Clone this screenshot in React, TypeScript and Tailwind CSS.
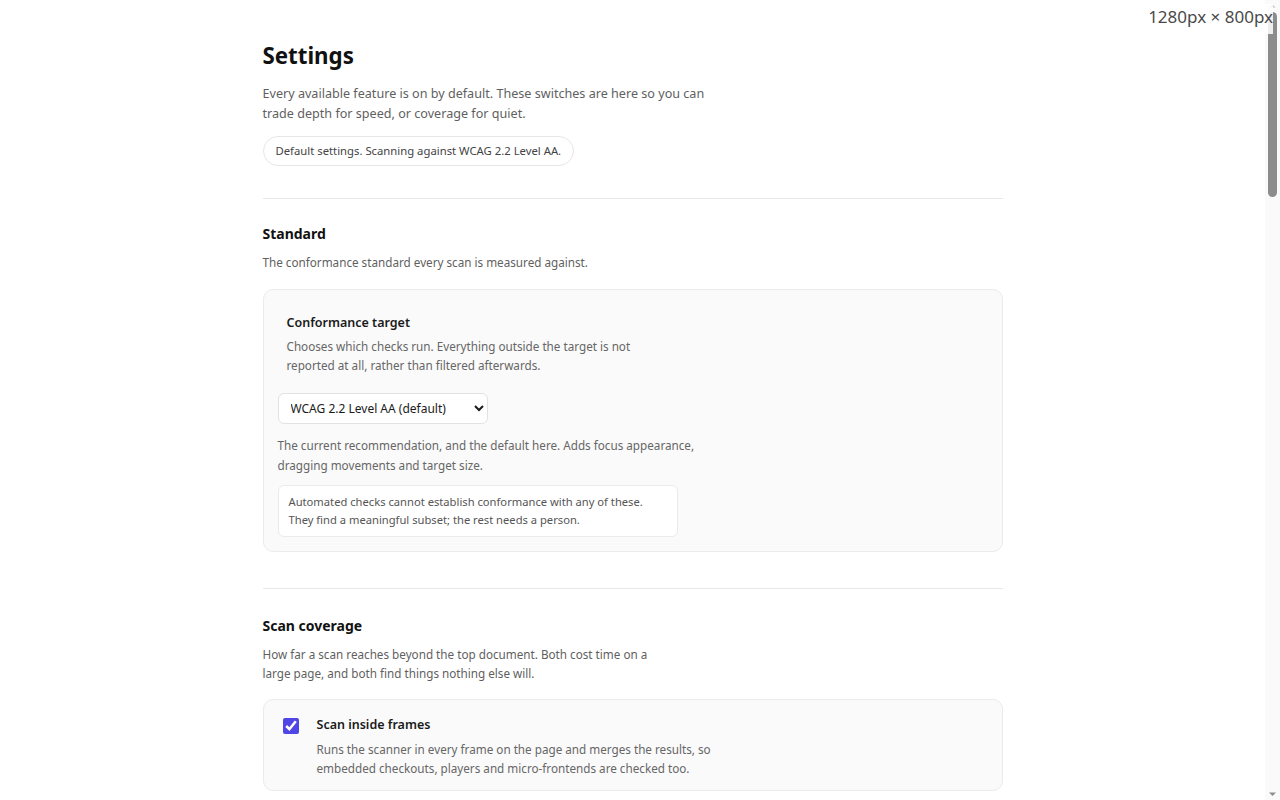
import React from 'react';

const font = { fontFamily: '"Noto Sans", "Open Sans", Arial, sans-serif' };

function SectionHead({ title, children }: { title: string; children: React.ReactNode }) {
  return (
    <>
      <h2 className="text-[14px] leading-[22px] font-bold text-[#111]">{title}</h2>
      <p className="mt-2 max-w-[400px] text-[11.7px] leading-[19.5px] text-[#5f5f5f]">{children}</p>
    </>
  );
}

function CheckRow({ title, desc, checked = true }: { title: string; desc: string; checked?: boolean }) {
  return (
    <label className="flex gap-[18px] rounded-[10px] border border-[#ebebeb] bg-[#fafafa] pl-[19px] pr-4 pt-[15px] pb-[12px]">
      <input
        type="checkbox"
        defaultChecked={checked}
        className="mt-[3px] h-4 w-4 shrink-0 accent-[#4f46e5]"
      />
      <div>
        <div className="text-[12.5px] leading-[20px] font-semibold text-[#1a1a1a]">{title}</div>
        <p className="mt-[5px] max-w-[420px] text-[11.7px] leading-[19px] text-[#666]">{desc}</p>
      </div>
    </label>
  );
}

function Scrollbar() {
  return (
    <div className="flex w-[15px] shrink-0 flex-col items-center bg-[#fafafa]">
      <svg width="15" height="12" viewBox="0 0 15 12" className="shrink-0">
        <path d="M4.5 7.5 L7.5 4.5 L10.5 7.5 Z" fill="#c4c4c4" />
      </svg>
      <div className="h-[185px] w-[9px] rounded-full bg-[#8c8c8c]" />
      <div className="flex-1" />
      <svg width="15" height="12" viewBox="0 0 15 12" className="shrink-0">
        <path d="M4 4.5 L11 4.5 L7.5 8 Z" fill="#8c8c8c" />
      </svg>
    </div>
  );
}

export default function App() {
  return (
    <div className="relative flex h-screen bg-white" style={font}>
      <div className="h-full flex-1 overflow-y-auto">
        <main className="mx-auto max-w-[740px] pt-10 pb-24 min-h-[3330px]">
          <h1 className="text-[22.3px] leading-[32px] font-bold text-[#111]">Settings</h1>
          <p className="mt-[12px] max-w-[460px] text-[12.6px] leading-[20px] text-[#5f5f5f]">
            Every available feature is on by default. These switches are here so you can trade depth for
            speed, or coverage for quiet.
          </p>
          <div className="mt-[12px] inline-flex h-[30px] items-center rounded-full border border-[#e6e6e6] px-3 text-[11.3px] text-[#444]">
            Default settings. Scanning against WCAG 2.2 Level AA.
          </div>

          <hr className="mt-8 border-t border-[#e8e8e8]" />

          <section className="mt-6">
            <SectionHead title="Standard">The conformance standard every scan is measured against.</SectionHead>
            <div className="mt-4 rounded-[10px] border border-[#ebebeb] bg-[#fafafa] pl-[14px] pr-4 pt-4 pb-[14px]">
              <div className="px-[9px] pt-[7px]">
                <div className="text-[12.5px] leading-[20px] font-semibold text-[#1a1a1a]">Conformance target</div>
                <p className="mt-[4px] max-w-[360px] text-[11.7px] leading-[19px] text-[#666]">
                  Chooses which checks run. Everything outside the target is not reported at all, rather than
                  filtered afterwards.
                </p>
              </div>
              <select
                defaultValue="22aa"
                className="mt-[18px] block h-[31px] w-[210px] rounded-md border border-[#e2e2e2] bg-white pl-[8px] pr-2 text-[12px] text-[#1a1a1a]"
              >
                <option value="21a">WCAG 2.1 Level A</option>
                <option value="21aa">WCAG 2.1 Level AA</option>
                <option value="22a">WCAG 2.2 Level A</option>
                <option value="22aa">WCAG 2.2 Level AA (default)</option>
                <option value="22aaa">WCAG 2.2 Level AAA</option>
              </select>
              <p className="mt-[11px] max-w-[440px] text-[11.7px] leading-[20px] text-[#666]">
                The current recommendation, and the default here. Adds focus appearance, dragging movements and
                target size.
              </p>
              <div className="mt-[10px] w-[400px] rounded-md border border-[#ebebeb] bg-white px-[10px] py-[7px] text-[11.2px] leading-[18px] text-[#555]">
                Automated checks cannot establish conformance with any of these. They find a meaningful subset;
                the rest needs a person.
              </div>
            </div>
          </section>

          <hr className="mt-9 border-t border-[#e8e8e8]" />

          <section className="mt-[26px]">
            <SectionHead title="Scan coverage">
              How far a scan reaches beyond the top document. Both cost time on a large page, and both find
              things nothing else will.
            </SectionHead>
            <div className="mt-[15px] flex flex-col gap-3">
              <CheckRow
                title="Scan inside frames"
                desc="Runs the scanner in every frame on the page and merges the results, so embedded checkouts, players and micro-frontends are checked too."
              />
              <CheckRow
                title="Scan shadow DOM"
                desc="Walks into open shadow roots, so web components are checked the same way as the rest of the page."
              />
            </div>
          </section>

          <hr className="mt-9 border-t border-[#e8e8e8]" />

          <section className="mt-[26px]">
            <SectionHead title="Checks">
              Which kinds of problem are reported. Turning a group off hides it everywhere, including exports.
            </SectionHead>
            <div className="mt-[15px] flex flex-col gap-3">
              <CheckRow
                title="Colour contrast"
                desc="Measures text and non-text contrast against the background actually drawn, including images and gradients."
              />
              <CheckRow
                title="Best practices"
                desc="Reports issues that are not failures of the standard but commonly cause trouble for people using assistive technology."
              />
              <CheckRow
                title="Experimental rules"
                desc="Newer rules that may still report false positives. Useful for a second look, noisy on a first."
              />
            </div>
          </section>

          <hr className="mt-9 border-t border-[#e8e8e8]" />

          <section className="mt-[26px]">
            <SectionHead title="Reporting">How results are grouped and what is kept after a scan.</SectionHead>
            <div className="mt-[15px] flex flex-col gap-3">
              <CheckRow
                title="Highlight on page"
                desc="Outlines each affected element on the page while the panel is open."
              />
              <CheckRow
                title="Keep scan history"
                desc="Stores earlier results so a new scan can show what was fixed and what is new."
              />
            </div>
          </section>
        </main>
      </div>
      <Scrollbar />
      <div className="absolute top-[4px] right-[7px] bg-white/85 pl-1 pb-[4px] text-[17px] leading-[26px] text-[#4a4a4a]">
        1280px × 800px
      </div>
    </div>
  );
}
